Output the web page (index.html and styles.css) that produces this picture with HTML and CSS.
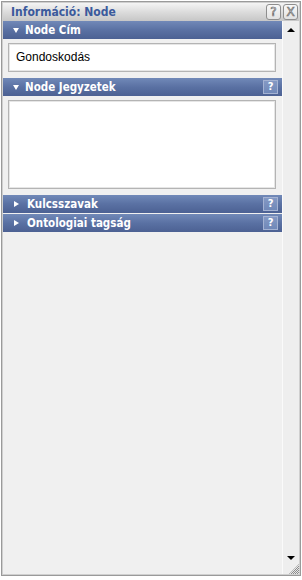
FILE: index.html
```html
<!DOCTYPE html>
<html>
<head>
<meta charset="utf-8">
<link rel="stylesheet" href="styles.css">
</head>
<body>
<div class="win">
  <div class="titlebar">
    <span class="title">Információ: Node</span>
    <span class="tbtn">?</span>
    <span class="tbtn">X</span>
  </div>
  <div class="body">
    <div class="panel">
      <div class="section">
        <div class="head"><span class="arrow"></span><span class="label">Node Cím</span></div>
        <div class="content">
          <div class="field">Gondoskodás</div>
        </div>
      </div>
      <div class="section">
        <div class="head"><span class="arrow"></span><span class="label">Node Jegyzetek</span><span class="help">?</span></div>
        <div class="content">
          <div class="area"></div>
        </div>
      </div>
      <div class="head closed"><span class="arrow small"></span><span class="label">Kulcsszavak</span><span class="help">?</span></div>
      <div class="head closed sep"><span class="arrow small"></span><span class="label">Ontologiai tagság</span><span class="help">?</span></div>
    </div>
    <div class="scroll">
      <span class="up"></span>
      <span class="down"></span>
      <span class="grip"></span>
    </div>
  </div>
</div>
</body>
</html>
```
FILE: styles.css
```css
html, body {
  margin: 0;
  padding: 0;
  background: #ffffff;
}
body {
  width: 302px;
  height: 580px;
  overflow: hidden;
}
.win {
  margin: 1px 0 0 1px;
  width: 298px;
  height: 573px;
  border: 1px solid #9a9a9a;
  box-shadow: inset 0 0 0 1px #cfcfcf;
  display: flex;
  flex-direction: column;
  box-sizing: content-box;
  background: #f0f0f0;
}
.titlebar {
  margin: 1px 1px 0 1px;
  height: 18px;
  background: linear-gradient(#f4f4f4, #dcdcdc 50%, #c6c6c6);
  display: flex;
  align-items: center;
  padding-left: 8px;
  gap: 2px;
}
.title {
  flex: 1;
  font-family: "DejaVu Sans", sans-serif;
  font-stretch: condensed;
  font-weight: bold;
  font-size: 12px;
  color: #3b5a9c;
}
.tbtn {
  width: 13px;
  height: 14px;
  border: 1px solid #8e8e8e;
  border-radius: 3px;
  background: linear-gradient(#f8f8f8, #e2e2e2);
  font-family: "DejaVu Sans", sans-serif;
  font-size: 12px;
  line-height: 14px;
  text-align: center;
  color: #f6f6f6;
  -webkit-text-stroke: 0.7px #6e6e6e;
}
.tbtn:last-child { margin-right: 1px; }
.body {
  flex: 1;
  display: flex;
  margin: 0 1px 1px 1px;
  min-height: 0;
}
.panel {
  width: 279px;
  display: flex;
  flex-direction: column;
}
.head {
  height: 18px;
  background: linear-gradient(#7189b8, #5a71a3 50%, #4c6193);
  display: flex;
  align-items: center;
  color: #ffffff;
  font-family: "DejaVu Sans", sans-serif;
  font-stretch: condensed;
  font-weight: bold;
  font-size: 11.5px;
}
.arrow {
  width: 0;
  height: 0;
  margin-left: 10px;
  margin-right: 6px;
  border-left: 3.5px solid transparent;
  border-right: 3.5px solid transparent;
  border-top: 5px solid #ffffff;
}
.arrow.small {
  margin-left: 11px;
  margin-right: 8px;
  border-top: 3.5px solid transparent;
  border-bottom: 3.5px solid transparent;
  border-left: 5px solid #ffffff;
  border-right: 0;
}
.label {
  flex: 1;
}
.help {
  width: 13px;
  height: 12px;
  border: 1px solid #a4b2d2;
  background: linear-gradient(#8499c4, #7088b8);
  font-size: 11px;
  line-height: 12px;
  text-align: center;
  margin-right: 4px;
  color: #fff;
}
.content {
  padding: 4px 6px 6px 5px;
}
.field {
  height: 27px;
  border: 1px solid #b4b4b4;
  box-shadow: inset 0 0 0 1px #e6e6e6;
  background: #fff;
  font-family: "Liberation Sans", Arial, sans-serif;
  font-size: 12px;
  line-height: 27px;
  padding-left: 7px;
  color: #000;
}
.area {
  height: 87px;
  border: 1px solid #b4b4b4;
  box-shadow: inset 0 0 0 1px #e6e6e6;
  background: #fff;
}
.closed.sep {
  margin-top: 1px;
}
.scroll {
  flex: 1;
  position: relative;
  border-left: 1px solid #fafafa;
  background: #eeeeee;
}
.up, .down {
  position: absolute;
  left: 4px;
  width: 0;
  height: 0;
  border-left: 4px solid transparent;
  border-right: 4px solid transparent;
}
.up {
  top: 7px;
  border-bottom: 4px solid #000;
}
.down {
  bottom: 14px;
  border-top: 4px solid #000;
}
.grip {
  position: absolute;
  right: 0;
  bottom: 0;
  width: 10px;
  height: 10px;
  background:
    repeating-conic-gradient(#8a8a8a 0 25%, #e8e8e8 0 50%) 0 0 / 2px 2px;
  clip-path: polygon(100% 0, 100% 100%, 0 100%);
}
```
